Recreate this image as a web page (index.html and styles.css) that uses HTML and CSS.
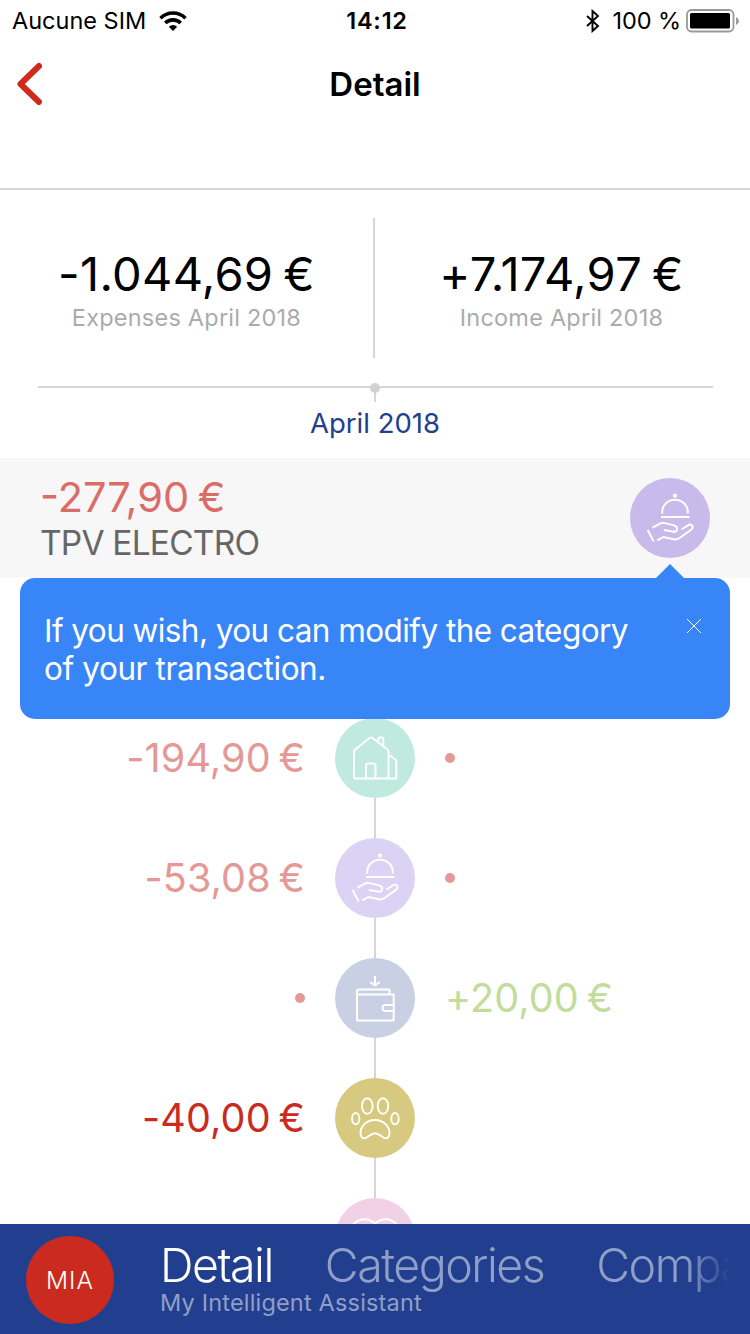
FILE: index.html
```html
<!DOCTYPE html>
<html lang="en">
<head>
    <meta charset="utf-8">
    <title>Detail</title>
    <link rel="stylesheet" href="styles.css">
</head>
<body>
    <svg class="defs">
        <symbol id="icon-dish" viewBox="0 0 80 80">
            <circle cx="45" cy="17.700" r="1.100" fill="#fff"/>
            <path d="M32.200 35.500v-1.500a12.800 12.300 0 0 1 25.600 0v1.500M31 39h28.500M17.700 52l6 11.500M22.500 49.700l8-4.300q1.600-.8 3.300-.5l10.400 2.500c4.300 1.300 3.400 6.800-.4 6.400l-10-1.800M51.500 51.500l6.500-4.200c3.800-2.300 6 1.800 3.300 4.300L49.500 60q-3.200 2-6 1.300L33.300 59l-6 3.400"/>
        </symbol>
        <symbol id="icon-house" viewBox="0 0 80 80">
            <path d="M19 60.500h42.300V43.500q0-1.200-1-2l-6.800-5M19 60.500V34q0-1.500 1.200-2.500L34.500 20q1.500-1 3 0l14.800 11.300q1.200 1 1.200 2.500v26.700M31 60.500v-13q0-2 2-2h5.500q2 0 2 2v13M43.300 23v-2q0-1.500 1.500-1.500h2q1.500 0 1.500 1.500v6.500"/>
        </symbol>
        <symbol id="icon-wallet" viewBox="0 0 80 80">
            <path d="M40 18v9M35.300 24l4.700 3.500 4.700-3.500M22 36.500v-3q0-2 2-2h30.500v5M22 36.500h36.700v26H22zM58.700 47h-8q-3.200 0-3.200 3t3.200 3h8"/>
        </symbol>
        <symbol id="icon-paw" viewBox="0 0 80 80">
            <ellipse cx="32.300" cy="28" rx="5.300" ry="7.800"/>
            <ellipse cx="48" cy="28" rx="5.300" ry="7.800"/>
            <ellipse cx="20.700" cy="40.700" rx="3.700" ry="5.600"/>
            <ellipse cx="60" cy="40.700" rx="3.700" ry="5.600"/>
            <path d="M40 42c-8 0-14.500 6-14.500 13 0 4.500 2.500 6.500 6 4.500 3.500-2.200 5.500-4.300 8.500-4.300s5 2.100 8.500 4.300c3.500 2 6 0 6-4.500C54.500 48 48 42 40 42z"/>
        </symbol>
        <symbol id="icon-heart" viewBox="0 0 80 80">
            <path d="M40 62L20 42C8 28 27 14 40 25.500 53 14 72 28 60 42z"/>
        </symbol>
    </svg>

    <header class="status-bar">
        <div class="carrier">
            <span>Aucune SIM</span>
            <svg class="wifi" width="28" height="20" viewBox="0 0 28 20">
                <path d="M1.500 7.200a17.800 17.800 0 0 1 25 0M6.300 12a11 11 0 0 1 15.400 0" fill="none" stroke="#000" stroke-width="3.600"/>
                <path d="M14 20l-4.200-4.200q4.200-3.400 8.400 0z"/>
            </svg>
        </div>
        <div class="clock">14:12</div>
        <div class="battery-info">
            <svg width="14" height="24" viewBox="0 0 14 24">
                <path d="M1 7l11 10-5.500 5V2L12 7 1 17" fill="none" stroke="#000" stroke-width="1.900"/>
            </svg>
            <span class="percent">100 %</span>
            <svg width="54" height="24" viewBox="0 0 54 24">
                <rect x="1" y="1" width="46.500" height="21.500" rx="4.500" fill="none" stroke="#999" stroke-width="1.800"/>
                <rect x="4" y="4" width="40" height="15.500" rx="1.500"/>
                <path d="M50 8q3 1.300 3 4t-3 4z" fill="#999"/>
            </svg>
        </div>
    </header>

    <div class="title-bar">
        <svg class="back" width="26" height="44" viewBox="0 0 26 44">
            <path d="M23 4L4.500 22 23 40" fill="none" stroke="#ce2b1e" stroke-width="6" stroke-linecap="round" stroke-linejoin="round"/>
        </svg>
        <h1>Detail</h1>
    </div>

    <section class="summary">
        <div class="total">
            <div class="sum">-1.044,69 €</div>
            <div class="label">Expenses April 2018</div>
        </div>
        <div class="divider"></div>
        <div class="total">
            <div class="sum">+7.174,97 €</div>
            <div class="label">Income April 2018</div>
        </div>
    </section>

    <div class="month">
        <svg width="675" height="19" viewBox="0 0 675 19">
            <path d="M0 4h675M337 4v15" stroke="#d6d6d6" stroke-width="2"/>
            <circle cx="337" cy="5" r="5" fill="#d2d2d2"/>
        </svg>
        <div class="month-name">April 2018</div>
    </div>

    <section class="selected">
        <div class="selected-text">
            <div class="selected-amount">-277,90 €</div>
            <div class="selected-name">TPV ELECTRO</div>
        </div>
        <svg class="icon food"><use href="#icon-dish"/></svg>
    </section>

    <div class="tooltip">
        <svg class="arrow" width="28" height="14" viewBox="0 0 28 14"><path d="M14 0l14 14H0z" fill="#3785f7"/></svg>
        <p>If you wish, you can modify the category<br><span class="second-line">of your transaction.</span></p>
        <svg class="close" width="16" height="16" viewBox="0 0 16 16"><path d="M1 1l14 14M15 1L1 15" stroke="#fff" stroke-width="1"/></svg>
    </div>

    <main class="timeline">
        <div class="row">
            <div class="left faded">-194,90 €</div>
            <svg class="icon home"><use href="#icon-house"/></svg>
            <div class="right"><span class="dot"></span></div>
        </div>
        <div class="row">
            <div class="left faded">-53,08 €</div>
            <svg class="icon food-light"><use href="#icon-dish"/></svg>
            <div class="right"><span class="dot"></span></div>
        </div>
        <div class="row">
            <div class="left"><span class="dot"></span></div>
            <svg class="icon wallet"><use href="#icon-wallet"/></svg>
            <div class="right gain">+20,00 €</div>
        </div>
        <div class="row">
            <div class="left spent">-40,00 €</div>
            <svg class="icon pets"><use href="#icon-paw"/></svg>
            <div class="right"></div>
        </div>
        <div class="row">
            <div class="left faded">-27,27 €</div>
            <svg class="icon health"><use href="#icon-heart"/></svg>
            <div class="right"></div>
        </div>
    </main>

    <footer class="nav">
        <div class="mia">MIA</div>
        <div class="nav-content">
            <div class="tabs">
                <span class="tab active">Detail</span>
                <span class="tab">Categories</span>
                <span class="tab">Compare</span>
            </div>
            <div class="assistant">My Intelligent Assistant</div>
        </div>
    </footer>
</body>
</html>
```
FILE: styles.css
```css
* {
    box-sizing: border-box;
}

body {
    margin: 0;
    width: 750px;
    height: 1334px;
    overflow: hidden;
    background-color: #fff;
    font-family: Inter, "Liberation Sans", sans-serif;
    display: flex;
    flex-direction: column;
    white-space: nowrap;
}

svg {
    display: block;
    flex: none;
}

.defs {
    position: absolute;
    width: 0;
    height: 0;
}

.status-bar {
    height: 40px;
    display: grid;
    grid-template-columns: 1fr auto 1fr;
    align-items: center;
    padding: 1px 10px 0 12px;
    font-size: 23.5px;
}

.carrier {
    display: flex;
    align-items: center;
    gap: 13px;
}

.clock {
    font-weight: 600;
    letter-spacing: 0.8px;
    padding-left: 2px;
}

.battery-info {
    display: flex;
    align-items: center;
    justify-content: flex-end;
}

.percent {
    margin: 0 5px 0 13px;
    letter-spacing: -0.1px;
}

.title-bar {
    height: 150px;
    border-bottom: 2px solid #d6d6d6;
    display: grid;
    grid-template-columns: 1fr auto 1fr;
    align-items: start;
    padding: 22px 16px 0;
}

.title-bar h1 {
    margin: 0;
    font-size: 33px;
    line-height: 44px;
    font-weight: 600;
}

.summary {
    height: 196px;
    display: flex;
    padding-top: 28px;
}

.divider {
    width: 2px;
    height: 140px;
    background-color: #d6d6d6;
}

.total {
    width: 373px;
    display: flex;
    flex-direction: column;
    align-items: center;
    padding-top: 27px;
}

.sum {
    font-size: 47px;
    line-height: 58px;
    letter-spacing: 0.3px;
    word-spacing: -3.5px;
}

.label {
    font-size: 23.5px;
    line-height: 28px;
    margin-top: 1px;
    letter-spacing: 0.22px;
    color: #a9acab;
}

.month {
    height: 72px;
    display: flex;
    flex-direction: column;
    align-items: center;
    margin-top: -3px;
}

.month-name {
    font-size: 27.5px;
    line-height: 40px;
    margin-top: 1px;
    color: #223f8f;
}

.selected {
    margin-top: 3px;
    height: 120px;
    background-color: #f7f7f7;
    display: flex;
    justify-content: space-between;
    align-items: center;
    padding: 0 40px;
}

.selected-amount {
    font-size: 41.5px;
    line-height: 50px;
    word-spacing: -3px;
    color: #dc6c67;
}

.selected-name {
    font-size: 33.5px;
    line-height: 42px;
    letter-spacing: -0.8px;
    color: #666;
}

.icon {
    width: 80px;
    height: 80px;
    border-radius: 50%;
    fill: none;
    stroke: #fff;
    stroke-width: 2;
    stroke-linejoin: round;
}

.food { background-color: #c8bbec; }
.food-light { background-color: #dad3f4; }
.home { background-color: #bfeadd; }
.wallet { background-color: #c9d0e3; }
.pets { background-color: #d7c97f; }
.health { background-color: #f1d1e5; }

.tooltip {
    position: relative;
    z-index: 2;
    flex: none;
    height: 141px;
    margin: 0 20px;
    padding: 34px 28px 0 24px;
    border-radius: 15px;
    background-color: #3785f7;
    color: #fff;
    display: flex;
    justify-content: space-between;
    font-size: 31.5px;
    line-height: 38px;
    letter-spacing: -0.56px;
}

.tooltip p {
    margin: 0;
}

.second-line {
    letter-spacing: -0.4px;
}

.arrow {
    position: absolute;
    top: -14px;
    right: 46px;
}

.close {
    margin-top: 6px;
}

.timeline {
    margin-top: -21px;
    height: 526px;
    overflow: hidden;
    flex: none;
}

.row {
    height: 120px;
    display: grid;
    grid-template-columns: 335px 80px 335px;
    align-items: center;
    font-size: 39.5px;
    letter-spacing: 0.15px;
    word-spacing: -3.5px;
    background: linear-gradient(#d6d6d6, #d6d6d6) center / 2px 100% no-repeat;
}

.left {
    display: flex;
    justify-content: flex-end;
    padding-right: 30px;
}

.right {
    display: flex;
    padding-left: 30px;
}

.dot {
    width: 10px;
    height: 10px;
    border-radius: 50%;
    background-color: #e59895;
}

.faded { color: #e59895; }
.spent { color: #ca2b1e; }
.gain { color: #c2dc9c; }

.row:last-child .left {
    padding-top: 2px;
}

.nav {
    height: 110px;
    flex: none;
    background-color: #223f8f;
    display: flex;
    padding: 12px 0 0 26px;
}

.mia {
    width: 88px;
    height: 88px;
    border-radius: 50%;
    background-color: #ca2b1e;
    color: #fff;
    display: flex;
    align-items: center;
    justify-content: center;
    font-size: 24.5px;
    font-weight: 300;
    letter-spacing: 1px;
    flex: none;
}

.nav-content {
    margin-left: 46px;
    color: #909fc7;
}

.tabs {
    width: 570px;
    overflow: hidden;
    display: flex;
    font-size: 46.5px;
    line-height: 58px;
    font-weight: 300;
    letter-spacing: -1.5px;
    mask-image: linear-gradient(to right, #000 525px, transparent 570px);
}

.tab {
    margin-right: 52px;
}

.active {
    color: #fff;
}

.assistant {
    font-size: 23.5px;
    line-height: 28px;
    margin-top: -5px;
    letter-spacing: 0.18px;
}
```
